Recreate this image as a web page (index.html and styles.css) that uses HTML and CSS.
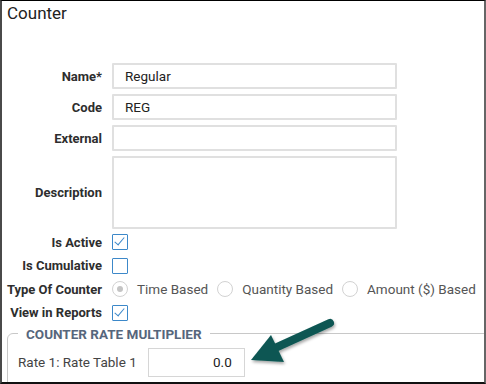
FILE: index.html
```html
<!DOCTYPE html>
<html lang="en">
<head>
    <meta charset="UTF-8">
    <meta name="viewport" content="width=device-width, initial-scale=1.0">
    <title>Counter</title>
    <link rel="stylesheet" href="styles.css">
</head>
<body>

    <div class="frame">
        <h1 class="page-title">Counter</h1>

        <div class="fields">
            <label class="field-label" for="name">Name*</label>
            <input class="text-input" type="text" id="name" value="Regular">

            <label class="field-label" for="code">Code</label>
            <input class="text-input" type="text" id="code" value="REG">

            <label class="field-label" for="external">External</label>
            <input class="text-input" type="text" id="external">

            <label class="field-label" for="description">Description</label>
            <textarea class="text-area" id="description"></textarea>
        </div>

        <div class="flags">
            <span class="field-label">Is Active</span>
            <div class="flag-cell"><span class="check checked"></span></div>

            <span class="field-label">Is Cumulative</span>
            <div class="flag-cell"><span class="check"></span></div>

            <span class="field-label">Type Of Counter</span>
            <div class="flag-cell radio-group">
                <span class="radio selected"></span><span class="radio-text">Time Based</span>
                <span class="radio"></span><span class="radio-text">Quantity Based</span>
                <span class="radio"></span><span class="radio-text">Amount ($) Based</span>
            </div>

            <span class="field-label">View in Reports</span>
            <div class="flag-cell"><span class="check checked"></span></div>
        </div>

        <fieldset class="rate-box">
            <legend>COUNTER RATE MULTIPLIER</legend>
            <div class="rate-row">
                <span class="rate-label">Rate 1: Rate Table 1</span>
                <input class="rate-input" type="text" value="0.0">
            </div>
        </fieldset>

        <!-- callout arrow drawn over the form -->
        <svg class="callout" width="100" height="60" viewBox="0 0 100 60">
            <defs>
                <filter id="shade" x="-20%" y="-20%" width="140%" height="140%">
                    <feDropShadow dx="1" dy="2" stdDeviation="1.5" flood-color="#000" flood-opacity="0.35"/>
                </filter>
            </defs>
            <g filter="url(#shade)">
                <line x1="85" y1="9" x2="30" y2="34" stroke="#0b5753" stroke-width="8" stroke-linecap="round"/>
                <polygon points="26,21 39,48 6,46" fill="#0b5753"/>
            </g>
        </svg>
    </div>

</body>
</html>
```

FILE: styles.css
```css
body {
    margin: 0;
    font-family: Roboto, "Liberation Sans", sans-serif;
    color: #333;
    background-color: #fff;
}
.frame {
    position: relative;
    width: 486px;
    height: 384px;
    box-sizing: border-box;
    border-top: 1px solid #000;
    border-left: 2px solid #4a4a4a;
    border-right: 2px solid #666;
    border-bottom: 2px solid #111;
    overflow: hidden;
}
.page-title {
    margin: 0;
    padding: 2px 0 0 5px;
    font-size: 17px;
    font-weight: 400;
    line-height: 21px;
    color: #222;
}

/* label / control grid */
.fields, .flags {
    display: grid;
    grid-template-columns: 100px 285px;
    column-gap: 10px;
    align-items: center;
}
.fields {
    margin-top: 39px;
    row-gap: 5px;
}
.flags {
    margin-top: 3px;
    row-gap: 3.5px;
    grid-auto-rows: 20px;
}
.field-label {
    text-align: right;
    font-size: 13px;
    font-weight: bold;
    color: #2e2e2e;
    white-space: nowrap;
}
.text-input, .text-area {
    box-sizing: border-box;
    width: 285px;
    border: 2px solid #e0e0e0;
    border-radius: 1px;
    font-family: Roboto, "Liberation Sans", sans-serif;
    font-size: 13.5px;
    color: #222;
    padding: 0 11px;
    outline: none;
}
.text-input {
    height: 26px;
}
.text-area {
    height: 73px;
    resize: none;
}

/* checkboxes and radios */
.flag-cell {
    display: flex;
    align-items: center;
    height: 20px;
}
.check {
    position: relative;
    display: inline-block;
    flex-shrink: 0;
    box-sizing: border-box;
    width: 16px;
    height: 16px;
    border: 1.5px solid #3c88c9;
    border-radius: 1px;
}
.check.checked::after {
    content: "";
    position: absolute;
    left: 4px;
    top: 0px;
    width: 4px;
    height: 9px;
    border-right: 1.5px solid #3c88c9;
    border-bottom: 1.5px solid #3c88c9;
    transform: rotate(40deg);
}
.radio {
    position: relative;
    display: inline-block;
    flex-shrink: 0;
    box-sizing: border-box;
    width: 16px;
    height: 16px;
    border: 1px solid #d2d2d2;
    border-radius: 50%;
    margin-right: 9px;
}
.radio.selected::after {
    content: "";
    position: absolute;
    left: 4px;
    top: 4px;
    width: 6px;
    height: 6px;
    border-radius: 50%;
    background-color: #c4c4c4;
}
.radio-text {
    flex-shrink: 0;
    font-size: 13.5px;
    color: #555;
    margin-right: 9px;
    white-space: nowrap;
}

/* rate multiplier group */
.rate-box {
    margin: 3px 0 0 5px;
    width: 560px;
    padding: 6px 10px 20px 10px;
    border: 1px solid #c8c8c8;
    border-radius: 6px;
}
.rate-box legend {
    padding: 0 8px;
    font-size: 13.5px;
    font-weight: bold;
    color: #56667c;
}
.rate-row {
    display: flex;
    align-items: center;
    gap: 11px;
}
.rate-label {
    font-size: 13.5px;
    color: #444;
    white-space: nowrap;
}
.rate-input {
    box-sizing: border-box;
    width: 97px;
    height: 29px;
    border: 1px solid #d6d6d6;
    padding: 0 12px;
    text-align: right;
    font-family: Roboto, "Liberation Sans", sans-serif;
    font-size: 13.5px;
    color: #222;
}
.callout {
    position: absolute;
    left: 243px;
    top: 313px;
}
```
